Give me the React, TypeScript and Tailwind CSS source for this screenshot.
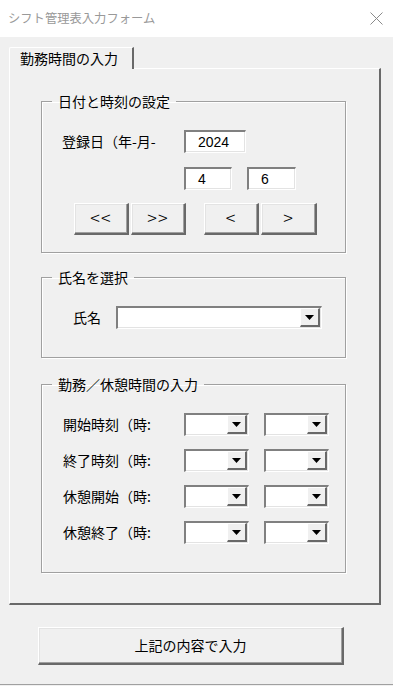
const font = { fontFamily: '"Noto Sans CJK JP", "Liberation Sans", sans-serif' };

const TextBox = ({ value, className }: { value: string; className: string }) => (
  <div
    className={`flex h-[23px] items-center border-t-2 border-l-2 border-r border-b border-t-[#808080] border-l-[#808080] border-r-white border-b-white bg-white pl-[12px] text-[14px] leading-none text-black shadow-[inset_-1px_-1px_0_#e3e3e3] ${className}`}
    style={{ fontFamily: '"Liberation Sans", sans-serif' }}
  >
    {value}
  </div>
);

const DropButton = () => (
  <div className="flex h-[19px] w-[20px] items-center justify-center border-t border-l border-r-2 border-b-2 border-t-white border-l-white border-r-[#696969] border-b-[#696969] bg-[#f0f0f0]">
    <svg width="9" height="5" viewBox="0 0 9 5">
      <path d="M0 0H9L4.5 5Z" fill="#000" />
    </svg>
  </div>
);

const Combo = ({ className }: { className: string }) => (
  <div
    className={`flex h-[23px] items-start justify-end border-t-2 border-l-2 border-r border-b border-t-[#808080] border-l-[#808080] border-r-white border-b-white bg-white pr-[1px] shadow-[inset_-1px_-1px_0_#e3e3e3] ${className}`}
  >
    <DropButton />
  </div>
);

const Btn = ({ label, className }: { label: string; className: string }) => (
  <button
    className={`flex items-center justify-center border-t border-l border-r-2 border-b-2 border-t-white border-l-white border-r-[#696969] border-b-[#696969] bg-[#f0f0f0] text-black shadow-[inset_-1px_-1px_0_#a0a0a0,inset_1px_1px_0_#e3e3e3] ${className}`}
    style={font}
  >
    {label}
  </button>
);

const Chevron = ({ label, className }: { label: string; className: string }) => (
  <Btn
    label={label}
    className={`h-[32px] pb-[2px] text-[18px] font-light tracking-[1px] ${className}`}
  />
);

const Frame = ({
  title,
  className,
  children,
}: {
  title: string;
  className: string;
  children: React.ReactNode;
}) => (
  <fieldset
    className={`w-[305px] border border-[#a0a0a0] shadow-[1px_1px_0_#fff,inset_1px_1px_0_#fff] ${className}`}
  >
    <legend className="ml-[10px] px-[6px] text-[14px] leading-[18px] text-black">{title}</legend>
    {children}
  </fieldset>
);

const TimeRow = ({ label }: { label: string }) => (
  <div className="flex items-center pl-[21px]">
    <span className="w-[121px] text-[14px] text-black">{label}</span>
    <Combo className="w-[65px]" />
    <Combo className="ml-[15px] w-[65px]" />
  </div>
);

export default function App() {
  return (
    <div className="flex h-[686px] w-[393px] flex-col bg-[#f0f0f0]" style={font}>
      <div className="flex h-[37px] items-center justify-between bg-white pl-[8px] pr-[10px]">
        <span className="text-[12.3px] text-[#999999]">シフト管理表入力フォーム</span>
        <svg width="13" height="13" viewBox="0 0 13 13">
          <path d="M0.5 0.5L12.5 12.5M12.5 0.5L0.5 12.5" stroke="#8a8a8a" strokeWidth="1" />
        </svg>
      </div>

      <div className="flex flex-col px-[9px] pt-[10px]">
        <div className="relative z-10 -mb-[1px] flex h-[22px] w-[125px] items-center rounded-tl-[2px] border-t border-l border-r-2 border-t-white border-l-white border-r-[#696969] bg-[#f0f0f0] pl-[10px] text-[14px] text-black">
          勤務時間の入力
        </div>
        <div className="flex h-[537px] w-[372px] flex-col border-t border-l border-r-2 border-b-2 border-t-white border-l-white border-r-[#696969] border-b-[#696969] pl-[31px]">
          <Frame title="日付と時刻の設定" className="mt-[23px] h-[161px]">
            <div className="mt-[20px] flex items-center pl-[20px]">
              <span className="w-[122px] text-[14px] text-black">登録日（年-月-</span>
              <TextBox value="2024" className="w-[62px]" />
            </div>
            <div className="mt-[14px] flex pl-[142px]">
              <TextBox value="4" className="w-[48px]" />
              <TextBox value="6" className="ml-[15px] w-[49px]" />
            </div>
            <div className="mt-[13px] flex pl-[32px]">
              <Chevron label="<<" className="w-[55px]" />
              <Chevron label=">>" className="ml-[2px] w-[55px]" />
              <Chevron label="<" className="ml-[18px] w-[55px]" />
              <Chevron label=">" className="ml-[2px] w-[56px]" />
            </div>
          </Frame>

          <Frame title="氏名を選択" className="mt-[15px] h-[90px]">
            <div className="mt-[20px] flex items-center pl-[31px]">
              <span className="w-[43px] text-[14px] text-black">氏名</span>
              <Combo className="w-[206px]" />
            </div>
          </Frame>

          <Frame title="勤務／休憩時間の入力" className="mt-[17px] h-[198px]">
            <div className="mt-[20px] flex flex-col gap-[13px]">
              <TimeRow label="開始時刻（時:" />
              <TimeRow label="終了時刻（時:" />
              <TimeRow label="休憩開始（時:" />
              <TimeRow label="休憩終了（時:" />
            </div>
          </Frame>
        </div>

        <div className="mt-[22px] flex pl-[29px]">
          <Btn label="上記の内容で入力" className="h-[38px] w-[306px] text-[14px]" />
        </div>
      </div>
      <div className="mt-auto h-[1px] bg-[#a0a0a0]" />
      <div className="h-[1px]" />
    </div>
  );
}
